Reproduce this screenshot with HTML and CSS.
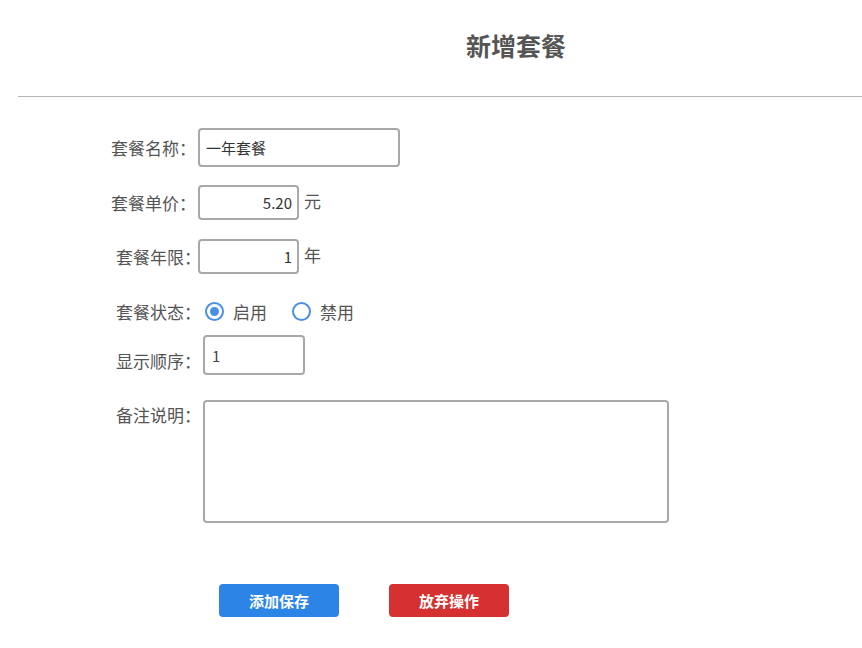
FILE: index.html
```html
<!DOCTYPE html>
<html lang="zh">
<head>
<meta charset="utf-8">
<title>新增套餐</title>
<link rel="stylesheet" href="styles.css">
</head>
<body>
<header class="page-head">
  <h1 class="page-title">新增套餐</h1>
</header>
<hr class="divider">
<form class="form">
  <div class="row row-name">
    <label class="label">套餐名称：</label>
    <div class="input input-name">一年套餐</div>
  </div>
  <div class="row row-price">
    <label class="label">套餐单价：</label>
    <div class="input input-short align-right">5.20</div>
    <span class="unit">元</span>
  </div>
  <div class="row row-year">
    <label class="label label-shift">套餐年限：</label>
    <div class="input input-short align-right">1</div>
    <span class="unit">年</span>
  </div>
  <div class="row row-status">
    <label class="label label-shift label-wide">套餐状态：</label>
    <div class="radios">
      <span class="radio checked"></span><span class="radio-text">启用</span>
      <span class="radio"></span><span class="radio-text">禁用</span>
    </div>
  </div>
  <div class="row row-order">
    <label class="label label-shift label-wide label-low">显示顺序：</label>
    <div class="input input-order">1</div>
  </div>
  <div class="row row-note">
    <label class="label label-shift label-wide label-top">备注说明：</label>
    <div class="textarea"></div>
  </div>
  <div class="actions">
    <button type="button" class="btn btn-save">添加保存</button>
    <button type="button" class="btn btn-cancel">放弃操作</button>
  </div>
</form>
</body>
</html>
```
FILE: styles.css
```css
* { box-sizing: border-box; }
body {
  margin: 0;
  background: #fff;
  font-family: "Noto Sans CJK SC", "Noto Sans", sans-serif;
  color: #555;
}
.page-head {
  padding: 28px 0 0 466px;
}
.page-title {
  margin: 0;
  font-size: 25px;
  line-height: 34px;
  font-weight: bold;
  color: #555;
}
.divider {
  margin: 34px 0 0 18px;
  border: 0;
  border-top: 1px solid #b4b4b4;
  height: 0;
}
.form {
  padding: 31px 0 0 111px;
}
.row {
  display: flex;
  align-items: center;
}
.label {
  width: 87px;
  font-size: 17px;
  line-height: 22px;
  color: #555;
  white-space: nowrap;
}
.label-shift { margin-left: 5px; width: 82px; }
.label-wide { width: 87px; }
.label-low { align-self: flex-end; margin-bottom: 3px; }
.label-top { align-self: flex-start; margin-top: 4px; }
.input {
  border: 2px solid #a8a8a8;
  border-radius: 4px;
  font-size: 15px;
  font-weight: 400;
  color: #333;
  display: flex;
  align-items: center;
}
.input-name { width: 202px; height: 39px; padding-left: 6px; }
.input-short { width: 101px; height: 35px; padding-right: 5px; }
.align-right { justify-content: flex-end; }
.input-order { width: 102px; height: 40px; padding-left: 7px; align-items: flex-start; padding-top: 8px; color: #444; }
.unit { margin-left: 5px; font-size: 17px; color: #555; margin-top: -4px; }
.row-price { margin-top: 18px; }
.row-year { margin-top: 19px; }
.row-status { margin-top: 25px; }
.row-order { margin-top: 11px; }
.row-note { margin-top: 25px; }
.radios { display: flex; align-items: center; }
.radio {
  width: 19px;
  height: 19px;
  border: 2px solid #4a90e2;
  border-radius: 50%;
  margin-left: 2px;
  display: flex;
  align-items: center;
  justify-content: center;
}
.radio.checked::after {
  content: "";
  width: 9px;
  height: 9px;
  border-radius: 50%;
  background: #4a90e2;
}
.radio-text { font-size: 17px; color: #555; margin-left: 9px; margin-right: 23px; }
.textarea {
  width: 466px;
  height: 123px;
  border: 2px solid #a8a8a8;
  border-radius: 4px;
}
.actions {
  display: flex;
  gap: 50px;
  padding: 61px 0 0 108px;
}
.btn {
  width: 120px;
  height: 33px;
  border: 0;
  border-radius: 4px;
  color: #fff;
  font-family: "Noto Sans CJK SC", sans-serif;
  font-size: 15px;
  font-weight: bold;
  padding: 0;
}
.btn-save { background: #2b84e6; }
.btn-cancel { background: #d63131; }
```
